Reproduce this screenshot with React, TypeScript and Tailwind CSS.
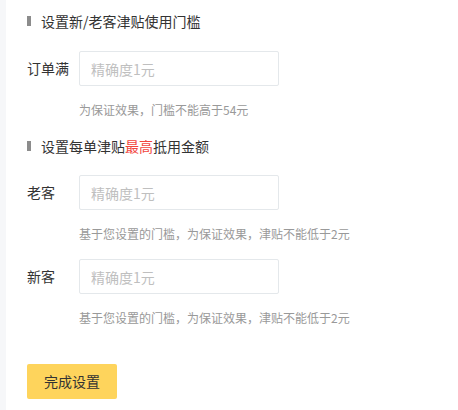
import React from 'react'

const font = { fontFamily: '"Noto Sans CJK SC", "Noto Sans", sans-serif' }

function Heading({ children }: { children: React.ReactNode }) {
  return (
    <div className="flex items-center h-5 text-[14px] leading-5 text-[#333]">
      <span className="w-1 h-[10px] bg-[#8c8c8c] mr-[10px]" />
      <span>{children}</span>
    </div>
  )
}

function Field({ label }: { label: string }) {
  return (
    <div className="flex items-center h-[35px]">
      <label className="w-[52px] text-[14px] text-[#333]">{label}</label>
      <input
        placeholder="精确度1元"
        className="w-[200px] h-[35px] px-[11px] text-[14px] text-[#333] placeholder:text-[#bfbfbf] border border-[#e4e8eb] rounded-[2px] outline-none"
        style={font}
      />
    </div>
  )
}

function Hint({ children }: { children: React.ReactNode }) {
  return <div className="pl-[52px] mt-4 text-[12px] leading-4 text-[#999]">{children}</div>
}

export default function App() {
  return (
    <div className="flex min-h-[410px] bg-white" style={font}>
      <div className="w-[6px] bg-[#f6f7f9]" />
      <div className="flex flex-col pl-[21px] pt-[11px]">
        <Heading>设置新/老客津贴使用门槛</Heading>
        <div className="mt-5">
          <Field label="订单满" />
        </div>
        <Hint>为保证效果，门槛不能高于54元</Hint>

        <div className="mt-[18px]">
          <Heading>
            设置每单津贴<span className="text-[#f2453d]">最高</span>抵用金额
          </Heading>
        </div>
        <div className="mt-[19px]">
          <Field label="老客" />
        </div>
        <Hint>基于您设置的门槛，为保证效果，津贴不能低于2元</Hint>
        <div className="mt-[17px]">
          <Field label="新客" />
        </div>
        <Hint>基于您设置的门槛，为保证效果，津贴不能低于2元</Hint>

        <button className="mt-[38px] w-[90px] h-[35px] bg-[#fed45c] rounded-[2px] text-[14px] text-[#333]">
          完成设置
        </button>
      </div>
    </div>
  )
}
